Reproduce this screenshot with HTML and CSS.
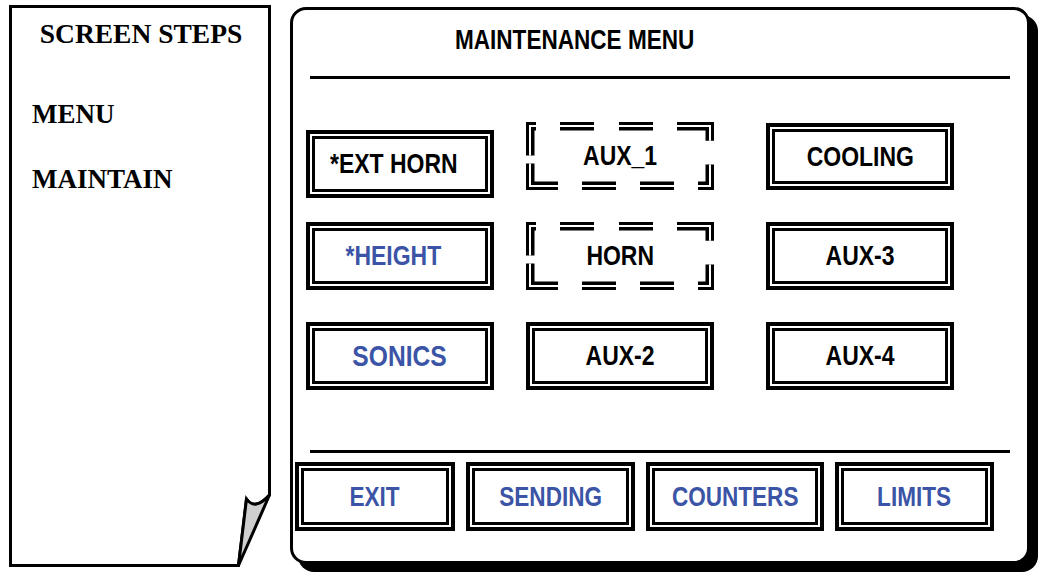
FILE: index.html
```html
<!doctype html>
<html>
<head>
<meta charset="utf-8">
<title>Maintenance Menu</title>
<link rel="stylesheet" href="styles.css">
</head>
<body>
<div class="page">
	<div class="steps">
		<svg class="sheet" width="262" height="562" viewBox="0 0 262 562">
			<path d="M1.5,1.5 H260.5 V490 Q246,506 237.5,494 L229.5,560.5 H1.5 Z" fill="none" stroke="#000" stroke-width="3" stroke-linejoin="miter"/>
			<path d="M237.5,494 Q246,506 260.5,490 L229.5,560.5 Z" fill="#cfcfcf" stroke="#000" stroke-width="3" stroke-linejoin="round"/>
		</svg>
		<h2 class="steps-title">SCREEN STEPS</h2>
		<p class="step first">MENU</p>
		<p class="step">MAINTAIN</p>
	</div>

	<div class="frame">
		<div class="drop-shadow"></div>
		<div class="panel">
			<h1 class="panel-title"><span class="t">MAINTENANCE MENU</span></h1>
			<div class="rule"></div>

			<div class="grid">
				<div class="btn star drop"><span class="t">*EXT HORN</span></div>
				<div class="btn dashed">
					<svg class="dash" viewBox="0 0 188 69" preserveAspectRatio="none">
						<path class="dash-out" d="M4,34 V4 H10 M34,4 H68 M93,4 H127 M151,4 H184 V19 M184,43 V65 H172 M148,65 H114 M90,65 H56 M32,65 H4 V42"/>
						<path class="dash-in" d="M4,34 V4 H10 M34,4 H68 M93,4 H127 M151,4 H184 V19 M184,43 V65 H172 M148,65 H114 M90,65 H56 M32,65 H4 V42"/>
					</svg>
					<span class="t">AUX_1</span>
				</div>
				<div class="btn nudge"><span class="t">COOLING</span></div>

				<div class="btn blue star"><span class="t">*HEIGHT</span></div>
				<div class="btn dashed">
					<svg class="dash" viewBox="0 0 188 69" preserveAspectRatio="none">
						<path class="dash-out" d="M4,34 V4 H10 M34,4 H68 M93,4 H127 M151,4 H184 V19 M184,43 V65 H172 M148,65 H114 M90,65 H56 M32,65 H4 V42"/>
						<path class="dash-in" d="M4,34 V4 H10 M34,4 H68 M93,4 H127 M151,4 H184 V19 M184,43 V65 H172 M148,65 H114 M90,65 H56 M32,65 H4 V42"/>
					</svg>
					<span class="t">HORN</span>
				</div>
				<div class="btn"><span class="t">AUX-3</span></div>

				<div class="btn blue big"><span class="t">SONICS</span></div>
				<div class="btn"><span class="t">AUX-2</span></div>
				<div class="btn"><span class="t">AUX-4</span></div>
			</div>

			<div class="rule low"></div>

			<div class="bar">
				<div class="btn blue exit"><span class="t">EXIT</span></div>
				<div class="btn blue sending"><span class="t">SENDING</span></div>
				<div class="btn blue counters"><span class="t">COUNTERS</span></div>
				<div class="btn blue limits"><span class="t">LIMITS</span></div>
			</div>
		</div>
	</div>
</div>
</body>
</html>
```

FILE: styles.css
```css
*{margin:0; padding:0; box-sizing:border-box;}
html,body{background:#fff;}
body{font-family:"Liberation Sans",Arial,sans-serif; color:#000;}

.page{display:flex; align-items:flex-start; padding:5px 0 0 9px;}

/* left sheet with the curled corner */
.steps{position:relative; width:262px; height:562px; flex:none; font-family:"Liberation Serif","Times New Roman",serif; font-weight:bold; font-size:27px; line-height:30px;}
.sheet{position:absolute; left:0; top:0;}
.steps-title{font-size:27.5px; text-align:center; margin-top:14px; padding-left:2px;}
.step{padding-left:23px; margin-top:35px;}
.step.first{margin-top:50px;}

/* main panel; the hard black drop shadow shares its grid cell */
.frame{display:grid; margin:2px 0 0 19px; flex:none;}
.drop-shadow, .panel{grid-area:1 / 1; width:740px; height:557px; border-radius:16px;}
.drop-shadow{background:#000; margin:8px 0 0 8px;}
.panel{border:3px solid #000; background:#fff;}
.panel-title{font-size:27.5px; line-height:30px; font-weight:bold; margin:15px 0 0 162px; white-space:nowrap;}
.panel-title .t{transform-origin:left center;}

/* the reference face is a narrow grotesque: squeeze the wide one */
.t{display:inline-block; transform:scaleX(.82);}

.rule{height:3px; background:#000; margin:21px 17px 0;}
.rule.low{margin-top:60px;}

.grid{display:grid; grid-template-columns:220px 240px 188px; grid-auto-rows:68px; row-gap:32px; margin:43px 0 0 13px;}

.btn{display:flex; align-items:center; justify-content:center; height:68px; width:188px; border:4px solid #000; box-shadow:inset 0 0 0 2px #fff, inset 0 0 0 5px #000; font-weight:bold; font-size:28px; line-height:30px; white-space:nowrap; background:#fff;}
.btn.blue{color:#3b54a6;}
.btn.big{font-size:30px;}
.btn.star{padding-right:13px;}
.btn.drop{margin-top:8px;}
.btn.nudge{margin-top:1px; height:67px;}

.btn.dashed{position:relative; border:none; box-shadow:none; background:none;}
.dash{position:absolute; left:0; top:0; width:100%; height:100%;}
.dash path{fill:none; stroke-linecap:butt; stroke-linejoin:miter;}
.dash-out{stroke:#000; stroke-width:9;}
.dash-in{stroke:#fff; stroke-width:2;}
.btn.dashed .t{position:relative;}

.bar{display:flex; gap:11px; margin:9px 0 0 2px;}
.bar .btn{height:69px; font-size:27.5px;}
.exit{width:160px;}
.sending{width:169px;}
.counters{width:178px;}
.limits{width:159px;}
```
